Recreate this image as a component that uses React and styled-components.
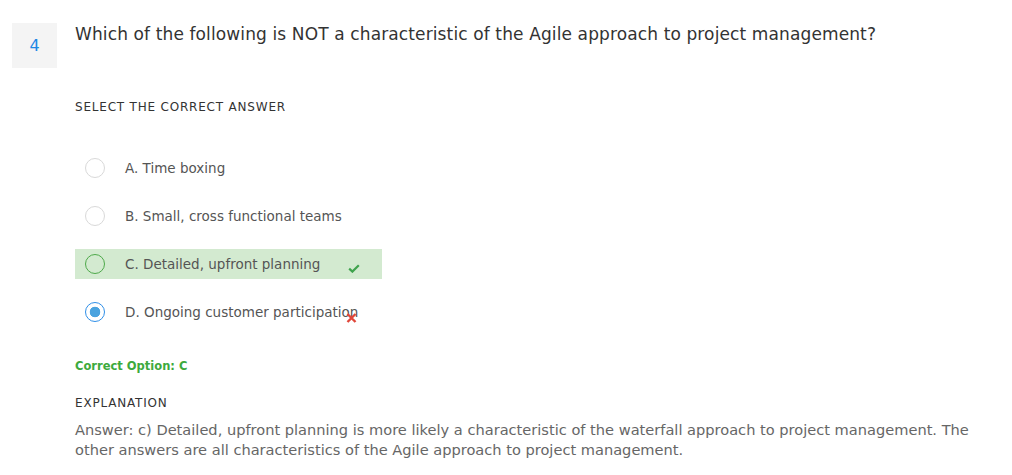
import React from "react";
import styled, { createGlobalStyle } from "styled-components";

const GlobalStyle = createGlobalStyle`
  body {
    margin: 0;
    background: #ffffff;
    font-family: "DejaVu Sans", "Liberation Sans", sans-serif;
  }
`;

const options = [
  { key: "A", text: "Time boxing" },
  { key: "B", text: "Small, cross functional teams" },
  { key: "C", text: "Detailed, upfront planning", state: "correct" },
  { key: "D", text: "Ongoing customer participation", state: "wrong" },
];

export default function App() {
  return (
    <Page>
      <GlobalStyle />
      <Header>
        <NumberBox>4</NumberBox>
        <Question>
          Which of the following is NOT a characteristic of the Agile approach to project management?
        </Question>
      </Header>
      <Body>
        <Label>Select the correct answer</Label>
        <OptionList>
          {options.map((o) => (
            <Option key={o.key} $state={o.state}>
              <Radio $state={o.state} />
              <OptionText>
                {o.key}. {o.text}
              </OptionText>
              {o.state === "correct" && (
                <Mark $state="correct">
                  <svg width="12" height="9" viewBox="0 0 12 9">
                    <path d="M1.2 4.6 L4.4 7.6 L10.8 1.2" fill="none" stroke="#3fa34d" strokeWidth="2.2" />
                  </svg>
                </Mark>
              )}
              {o.state === "wrong" && (
                <Mark $state="wrong">
                  <svg width="11" height="10" viewBox="0 0 11 10">
                    <path d="M1.5 1 L9.5 9 M9.5 1 L1.5 9" fill="none" stroke="#e0463a" strokeWidth="2.4" />
                  </svg>
                </Mark>
              )}
            </Option>
          ))}
        </OptionList>
        <Correct>Correct Option: C</Correct>
        <Label $gap="23px">Explanation</Label>
        <Explanation>
          Answer: c) Detailed, upfront planning is more likely a characteristic of the waterfall approach to project management. The other answers are all characteristics of the Agile approach to project management.
        </Explanation>
      </Body>
    </Page>
  );
}

const Page = styled.div`
  padding: 23px 12px 0 12px;
  color: #333;
`;

const Header = styled.div`
  display: flex;
  align-items: flex-start;
  gap: 18px;
`;

const NumberBox = styled.div`
  width: 45px;
  height: 45px;
  flex: none;
  background: #f4f4f4;
  color: #1e88e5;
  font-size: 16px;
  display: flex;
  align-items: center;
  justify-content: center;
`;

const Question = styled.div`
  font-size: 17px;
  letter-spacing: 0.12px;
  line-height: 22px;
  color: #333;
`;

const Body = styled.div`
  padding-left: 63px;
  padding-right: 28px;
`;

const Label = styled.div`
  font-size: 12px;
  text-transform: uppercase;
  letter-spacing: 0.8px;
  color: #333;
  line-height: 14px;
  margin-top: ${(p) => p.$gap || "32px"};
`;

const OptionList = styled.div`
  display: flex;
  flex-direction: column;
  gap: 18px;
  margin-top: 39px;
`;

const Option = styled.div`
  position: relative;
  width: 307px;
  height: 30px;
  display: flex;
  align-items: center;
  padding-left: 10px;
  box-sizing: border-box;
  background: ${(p) => (p.$state === "correct" ? "#d3ead0" : "transparent")};
`;

const Radio = styled.span`
  width: 20px;
  height: 20px;
  flex: none;
  box-sizing: border-box;
  border-radius: 50%;
  border: 1px solid
    ${(p) =>
      p.$state === "correct" ? "#4ea94a" : p.$state === "wrong" ? "#2f8fe8" : "#d9d9d9"};
  background: ${(p) =>
    p.$state === "wrong"
      ? "radial-gradient(circle, #4aa3df 0 5px, #ffffff 5.6px)"
      : p.$state === "correct"
      ? "transparent"
      : "#ffffff"};
`;

const OptionText = styled.span`
  margin-left: 20px;
  font-size: 13.5px;
  color: #555;
  white-space: nowrap;
`;

const Mark = styled.span`
  position: absolute;
  left: ${(p) => (p.$state === "correct" ? "273px" : "271px")};
  top: ${(p) => (p.$state === "correct" ? "15px" : "16px")};
  display: flex;
`;

const Correct = styled.div`
  margin-top: 32px;
  font-size: 11.5px;
  font-weight: 600;
  color: #3daa3d;
  line-height: 14px;
`;

const Explanation = styled.div`
  margin-top: 10px;
  font-size: 14.6px;
  line-height: 20px;
  color: #666;
`;
